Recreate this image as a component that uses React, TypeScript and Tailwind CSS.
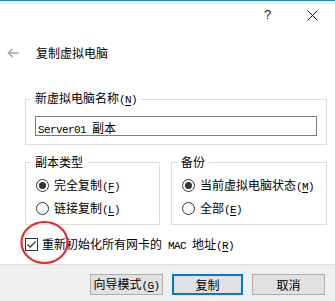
import type { ReactNode } from "react";

const CJK = "font-['Noto_Sans_CJK_SC','Noto_Sans',sans-serif]";
const MONO = "font-['Liberation_Mono','DejaVu_Sans_Mono',monospace] text-[11px] tracking-[-0.6px]";

// access key like (N) — half-width chars, letter underlined
function Key({ k }: { k: string }) {
  return (
    <span className={MONO}>
      (<span className="underline underline-offset-[2px]">{k}</span>)
    </span>
  );
}

function Radio({ checked, children }: { checked?: boolean; children: ReactNode }) {
  return (
    <div className="h-[23px] flex items-center ml-[5px]">
      <span className="w-[13px] h-[13px] rounded-full border border-[#333] flex items-center justify-center shrink-0">
        {checked && <span className="w-[7px] h-[7px] rounded-full bg-[#333]" />}
      </span>
      <span className="ml-[5px] text-[12px] leading-[16px] text-black whitespace-nowrap">{children}</span>
    </div>
  );
}

function Group({ title, className, children }: { title: ReactNode; className: string; children: ReactNode }) {
  return (
    <fieldset className={`border border-[#dcdcdc] pl-[5px] ${className}`}>
      <legend className="px-[4px] text-[12px] leading-[16px] text-black">{title}</legend>
      {children}
    </fieldset>
  );
}

function Button({ children, primary, w }: { children: ReactNode; primary?: boolean; w: string }) {
  return (
    <button
      className={`h-[21px] ${w} bg-[#e1e1e1] text-[12px] leading-[16px] text-black flex items-center justify-center ${
        primary ? "border-2 border-[#0078d7]" : "border border-[#adadad]"
      }`}
    >
      <span>{children}</span>
    </button>
  );
}

export default function App() {
  return (
    <div className={`relative w-[335px] h-[301px] bg-white border-t border-[#1a7fd4] flex flex-col overflow-hidden ${CJK}`}>
      {/* caption buttons */}
      <div className="h-[28px] flex justify-end">
        <span className="w-[45px] flex items-center justify-center text-[13px] text-[#222] font-['Liberation_Sans',sans-serif]">?</span>
        <span className="w-[45px] flex items-center justify-center">
          <svg width="11" height="11" viewBox="0 0 11 11">
            <path d="M0.5 0.5 L10.5 10.5 M10.5 0.5 L0.5 10.5" stroke="#111" strokeWidth="1" />
          </svg>
        </span>
      </div>

      {/* title */}
      <div className="mt-[12px] h-[24px] flex items-center">
        <svg className="ml-[7px]" width="12" height="10" viewBox="0 0 12 10">
          <path d="M11.5 5 H1.2 M5.5 0.8 L1.2 5 L5.5 9.2" stroke="#a6a6a6" strokeWidth="1.3" fill="none" />
        </svg>
        <span className="ml-[17px] text-[12px] leading-[16px] text-black">复制虚拟电脑</span>
      </div>

      {/* name */}
      <Group
        className="mt-[25px] ml-[25px] w-[302px] pr-[9px] pt-[8px] pb-[8px]"
        title={<>新虚拟电脑名称<Key k="N" /></>}
      >
        <div className="ml-[4px] h-[20px] border border-[#7a7a7a] flex items-center pl-[2px] text-black">
          <span className="whitespace-pre">
            <span className={MONO}>Server01 </span>
            <span className="text-[12px] leading-[16px]">副本</span>
          </span>
        </div>
      </Group>

      {/* options */}
      <div className="mt-[9px] ml-[25px] flex gap-[11px]">
        <Group className="w-[135px] pt-[4px] pb-[4px]" title="副本类型">
          <Radio checked>完全复制<Key k="F" /></Radio>
          <Radio>链接复制<Key k="L" /></Radio>
        </Group>
        <Group className="w-[156px] pt-[4px] pb-[4px]" title="备份">
          <Radio checked>当前虚拟电脑状态<Key k="M" /></Radio>
          <Radio>全部<Key k="E" /></Radio>
        </Group>
      </div>

      {/* checkbox */}
      <div className="h-[39px] flex items-center ml-[25px]">
        <span className="w-[13px] h-[13px] border border-[#333] flex items-center justify-center shrink-0">
          <svg width="11" height="11" viewBox="0 0 11 11">
            <path d="M1.5 5.5 L4.2 8.2 L9.5 2.5" stroke="#333" strokeWidth="1.2" fill="none" />
          </svg>
        </span>
        <span className="ml-[4px] text-[12px] leading-[16px] text-black whitespace-pre">
          重新初始化所有网卡的<span className={MONO}> MAC </span>地址<Key k="R" />
        </span>
      </div>

      {/* footer */}
      <div className="flex-1 bg-[#f0f0f0] border-t border-[#dfdfdf] pt-[9px] pr-[10px] flex justify-end gap-[9px]">
        <Button w="w-[73px]">向导模式<Key k="G" /></Button>
        <Button w="w-[71px]" primary>复制</Button>
        <Button w="w-[73px]">取消</Button>
      </div>

      {/* red annotation circle */}
      <svg className="absolute left-[19px] top-[218px] pointer-events-none" width="52" height="48" viewBox="0 0 52 48">
        <ellipse cx="25.5" cy="23.5" rx="23" ry="20.5" fill="none" stroke="#e8262b" strokeWidth="2.2" />
      </svg>
    </div>
  );
}
